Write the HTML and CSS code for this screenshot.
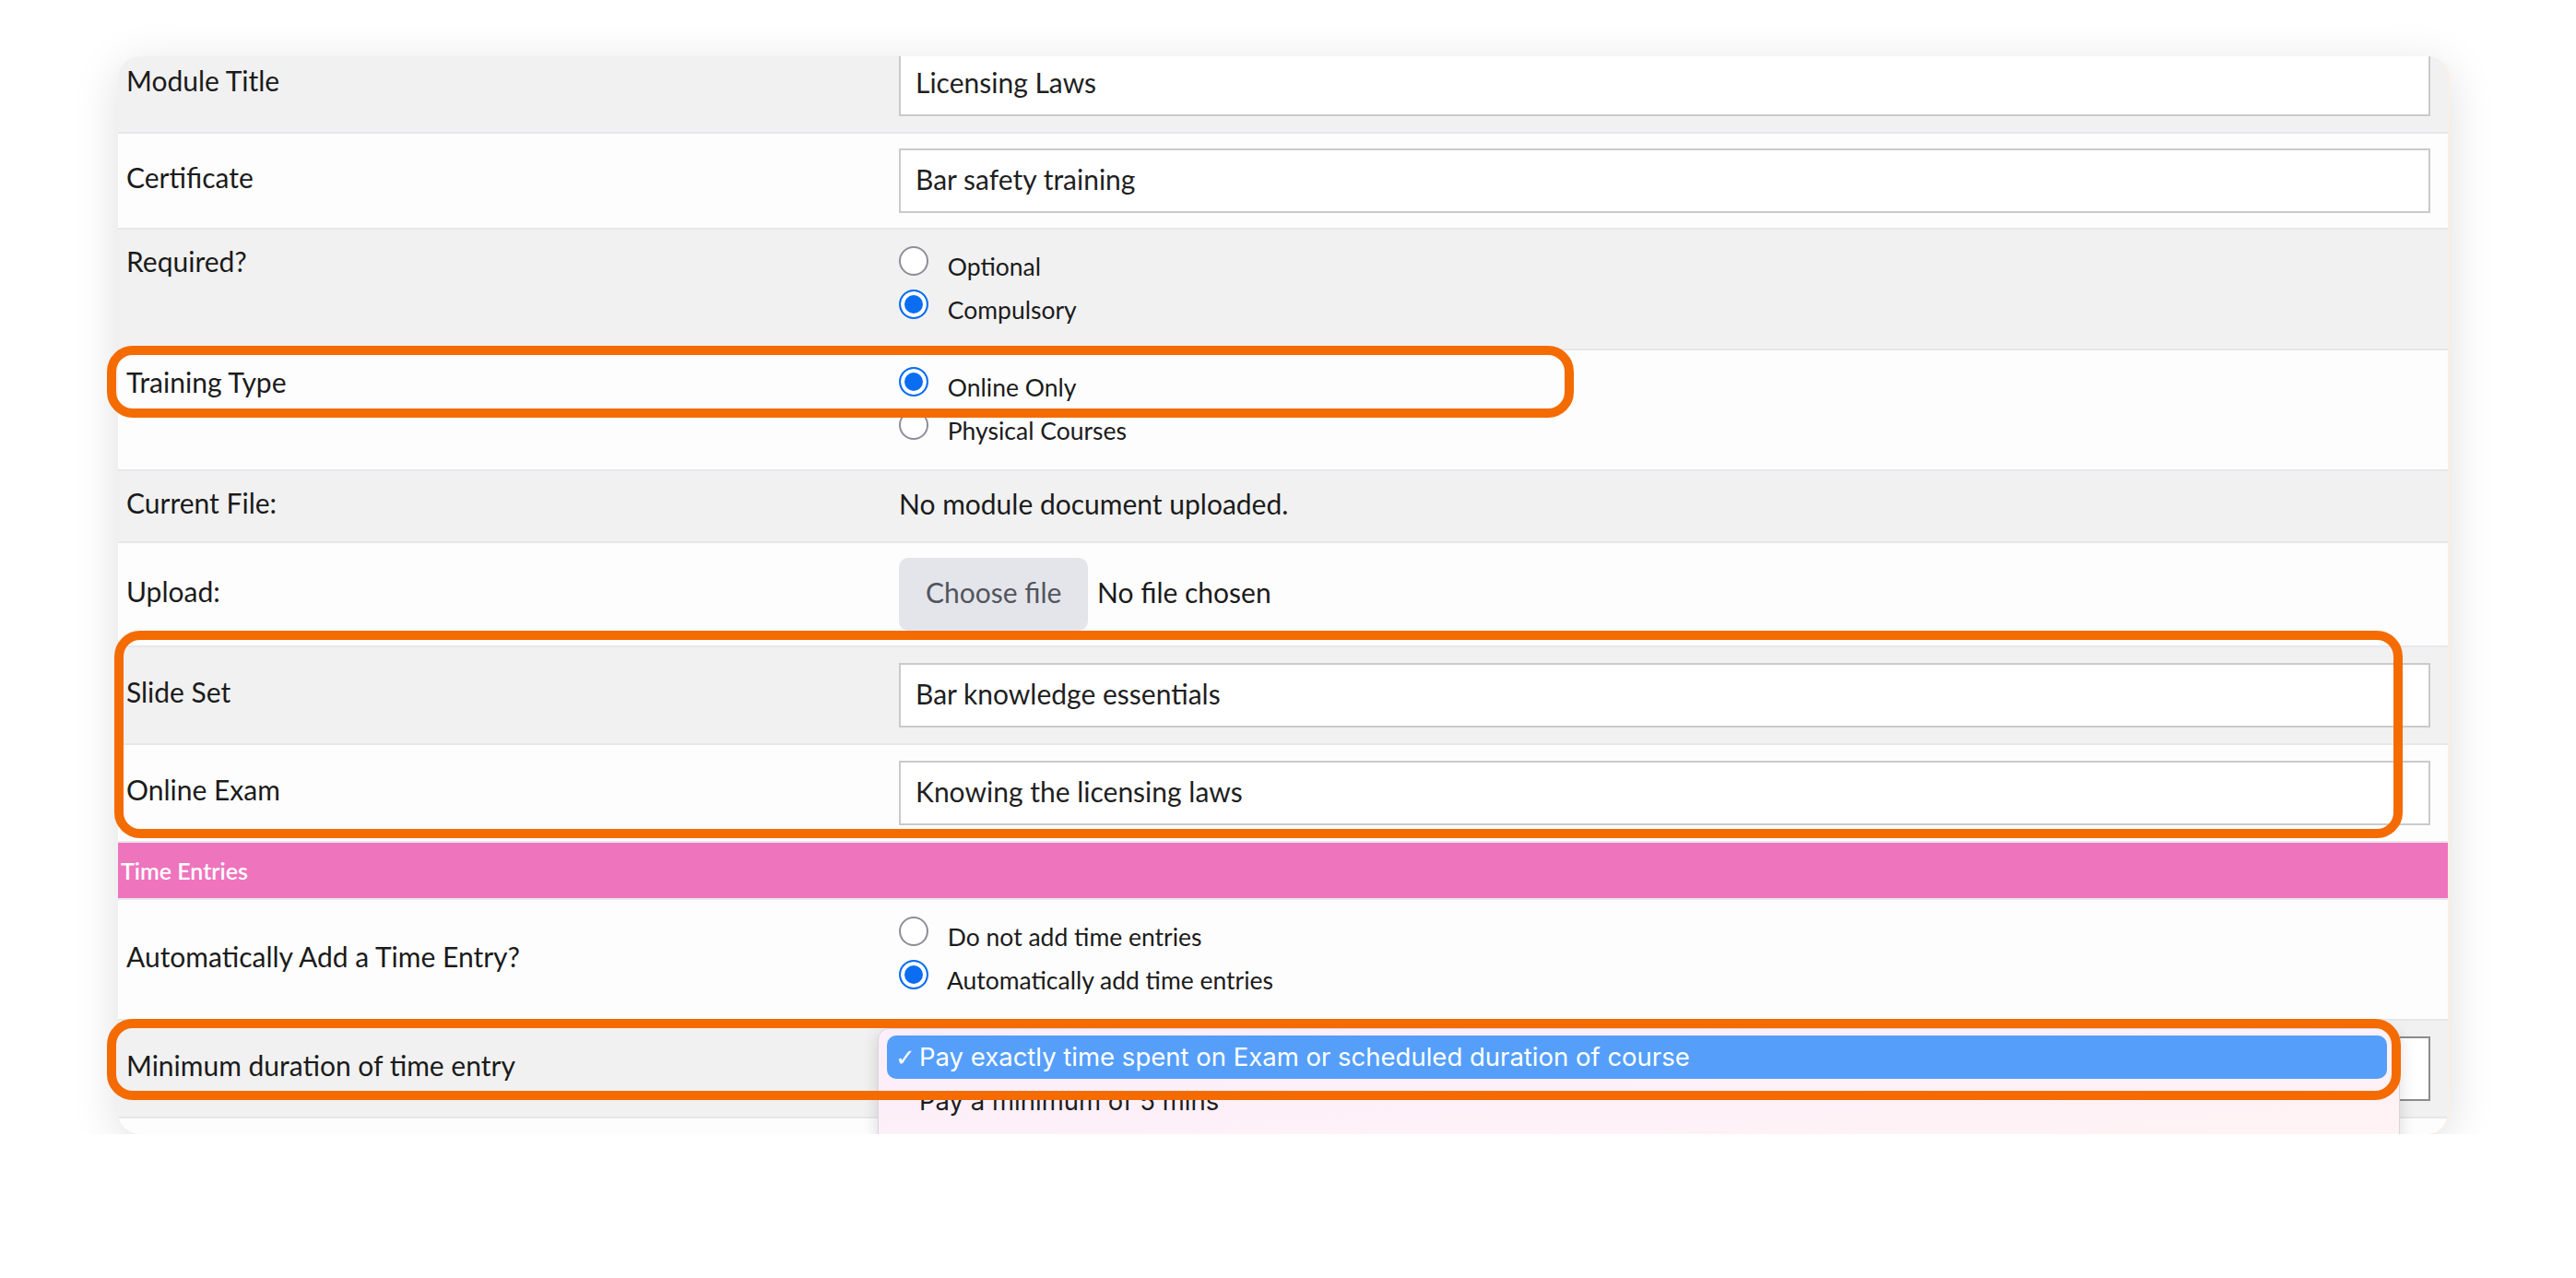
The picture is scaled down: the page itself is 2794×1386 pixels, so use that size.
FILE: index.html
```html
<!DOCTYPE html>
<html lang="en">
<head>
  <meta charset="UTF-8" />
  <meta name="viewport" content="width=device-width, initial-scale=1.0"/>
  <title>Edit Module</title>
  <link rel="stylesheet" href="styles.css">
</head>
<body>
  <div class="screen">
    <div class="panel">
      <table class="module-form">
        <colgroup>
          <col class="col-label">
          <col>
        </colgroup>

        <tr class="row-grey">
          <td class="label">Module Title</td>
          <td class="field"><input class="text-input" type="text" value="Licensing Laws"></td>
        </tr>
        <tr class="row-white">
          <td class="label">Certificate</td>
          <td class="field field-tight"><input class="text-input" type="text" value="Bar safety training"></td>
        </tr>
        <tr class="row-grey">
          <td class="label label-top">Required?</td>
          <td class="field field-options">
            <label class="option"><input type="radio" name="required"> Optional</label>
            <label class="option"><input type="radio" name="required" checked> Compulsory</label>
          </td>
        </tr>
        <tr class="row-white">
          <td class="label label-top">Training Type</td>
          <td class="field field-options">
            <label class="option"><input type="radio" name="training" checked> Online Only</label>
            <label class="option"><input type="radio" name="training"> Physical Courses</label>
          </td>
        </tr>
        <tr class="row-grey">
          <td class="label">Current File:</td>
          <td class="field field-text">No module document uploaded.</td>
        </tr>
        <tr class="row-white">
          <td class="label">Upload:</td>
          <td class="field field-upload">
            <label class="file-btn">Choose file<input type="file" hidden></label>
            <span class="file-name">No file chosen</span>
          </td>
        </tr>
        <tr class="row-grey">
          <td class="label">Slide Set</td>
          <td class="field"><input class="text-input" type="text" value="Bar knowledge essentials"></td>
        </tr>
        <tr class="row-white">
          <td class="label">Online Exam</td>
          <td class="field"><input class="text-input" type="text" value="Knowing the licensing laws"></td>
        </tr>

        <tr class="section">
          <td colspan="2">Time Entries</td>
        </tr>

        <tr class="row-white">
          <td class="label">Automatically Add a Time Entry?</td>
          <td class="field field-options">
            <label class="option"><input type="radio" name="auto_time"> Do not add time entries</label>
            <label class="option"><input type="radio" name="auto_time" checked> Automatically add time entries</label>
          </td>
        </tr>
        <tr class="row-grey">
          <td class="label">Minimum duration of time entry</td>
          <td class="field field-select">
            <select class="select-input">
              <option>Pay exactly time spent on Exam or scheduled duration of course</option>
              <option>Pay a minimum of 5 mins</option>
            </select>
            <!-- open dropdown list -->
            <div class="select-menu">
              <div class="menu-item is-active"><span class="tick">✓</span>Pay exactly time spent on Exam or scheduled duration of course</div>
              <div class="menu-item"><span class="tick"></span>Pay a minimum of 5 mins</div>
            </div>
          </td>
        </tr>
      </table>
    </div>

    <!-- highlight outlines -->
    <div class="mark mark-training"></div>
    <div class="mark mark-online"></div>
    <div class="mark mark-duration"></div>
  </div>
</body>
</html>
```

FILE: styles.css
```css
body {
  margin: 0;
  background: #fff;
  font-family: "Lato", "Noto Sans", sans-serif;
  color: #1b1b1b;
}

.screen {
  position: relative;
  width: 2529px;
  margin: 61px 0 0 128px;
}

.panel {
  box-sizing: border-box;
  height: 1169px;
  overflow: hidden;
  border-radius: 24px;
  border-right: 2px solid #fbeee2;
  background: #fdfdfd;
  box-shadow: 0 10px 50px rgba(0, 0, 0, 0.13);
}

.module-form {
  width: 100%;
  margin-top: -22px;
  border-collapse: collapse;
  table-layout: fixed;
  font-size: 30px;
}

.col-label {
  width: 847px;
}

.module-form td {
  padding: 0;
  border-bottom: 2px solid #e7e7eb;
}

.row-grey {
  background: #f1f1f1;
}

.row-white {
  background: #fdfdfd;
}

.label {
  padding: 0 0 8px 9px !important;
  line-height: 34px;
  vertical-align: middle;
}

.label-top {
  vertical-align: top;
  padding-top: 17px !important;
}

.field {
  padding: 17px 19px 17px 0 !important;
}

.field-tight {
  padding-top: 16px !important;
  padding-bottom: 16px !important;
}

.text-input {
  display: block;
  box-sizing: border-box;
  width: 100%;
  height: 70px;
  padding: 0 16px 4px;
  border: 2px solid #cacaca;
  background: #fff;
  font: inherit;
  color: #1f1f1f;
  outline: none;
}

/* radio lists */
.field-options {
  padding-bottom: 18px !important;
}

.option {
  display: block;
  font-size: 26.5px;
  line-height: 47px;
}

.option input {
  appearance: none;
  box-sizing: border-box;
  width: 32px;
  height: 32px;
  margin: 0 14px 0 0;
  border: 2px solid #8e8e99;
  border-radius: 50%;
  background: #fff;
  vertical-align: baseline;
}

.option input:checked {
  border-color: #0b6ef2;
  background: #0b6ef2;
  box-shadow: inset 0 0 0 4px #fff;
}

.field-text {
  padding-top: 18px !important;
  padding-bottom: 24px !important;
  line-height: 34px;
}

/* file upload */
.field-upload {
  padding-top: 16px !important;
  padding-bottom: 16px !important;
}

.field-upload .file-btn,
.field-upload .file-name {
  vertical-align: middle;
}

.file-name {
  position: relative;
  top: -3px;
}

.file-btn {
  display: inline-flex;
  align-items: center;
  box-sizing: border-box;
  height: 79px;
  padding: 0 29px 6px;
  margin-right: 2px;
  border-radius: 10px;
  background: #e4e5ea;
  color: #52555e;
  cursor: pointer;
}

/* section header */
.section td {
  height: 60px;
  padding: 0 0 0 3px;
  background: #ee74be;
  color: #fff;
  font-size: 25px;
  font-weight: 600;
  line-height: 30px;
}

/* select with its open list */
.field-select {
  position: relative;
}

.select-input {
  display: block;
  box-sizing: border-box;
  width: 100%;
  height: 70px;
  border: 2px solid #8c8c8c;
  background: #fff;
  appearance: none;
}

.select-menu {
  position: absolute;
  left: -23px;
  top: 8px;
  width: 1651px;
  height: 200px;
  box-sizing: border-box;
  padding: 7px 13px 0 9px;
  border: 1px solid #d9d5da;
  border-radius: 12px;
  background: linear-gradient(to bottom right, #fdeefb, #fff4f3);
  box-shadow: 0 4px 18px rgba(0, 0, 0, 0.14);
  font-family: "Inter", "Liberation Sans", sans-serif;
  font-size: 27.5px;
}

.menu-item {
  height: 47px;
  line-height: 47px;
  padding-left: 9px;
  margin-bottom: 1px;
  border-radius: 10px;
  color: #1c1c1c;
  white-space: nowrap;
}

.menu-item.is-active {
  background: #559ffb;
  color: #fff;
}

.tick {
  display: inline-block;
  width: 26px;
  font-family: "DejaVu Sans", sans-serif;
  font-size: 26px;
}

/* highlight outlines */
.mark {
  position: absolute;
  box-sizing: border-box;
  border: 10px solid #f46b02;
  border-radius: 28px;
  pointer-events: none;
}

.mark-training {
  left: -12px;
  top: 314px;
  width: 1591px;
  height: 78px;
}

.mark-online {
  left: -4px;
  top: 623px;
  width: 2482px;
  height: 225px;
}

.mark-duration {
  left: -12px;
  top: 1044px;
  width: 2488px;
  height: 88px;
}
```
